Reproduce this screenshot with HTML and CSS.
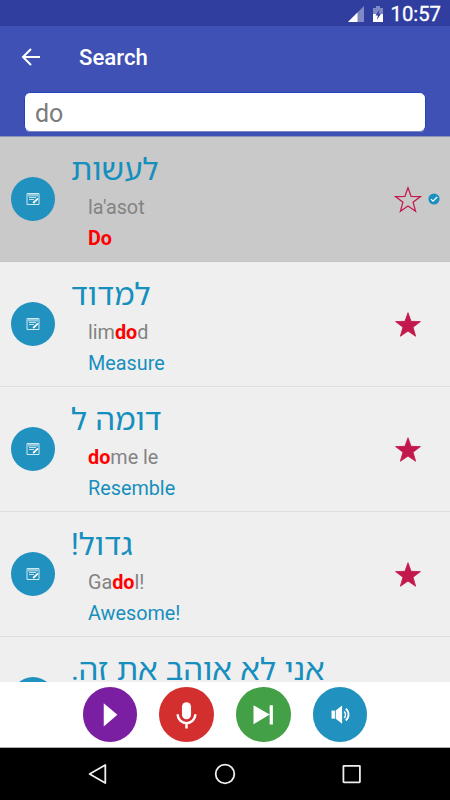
FILE: index.html
```html
<!DOCTYPE html>
<html lang="en">
<head>
    <meta charset="UTF-8">
    <meta name="viewport" content="width=device-width, initial-scale=1.0">
    <title>Search</title>
    <link rel="stylesheet" href="styles.css">
</head>
<body>
    <svg class="sprite" aria-hidden="true">
        <symbol id="note" viewBox="0 0 14 14">
            <path d="M1 1.5h12v11H1z" fill="#2191bf" stroke="#cfe9f4" stroke-width="1"/>
            <path d="M2 2h10v2.5H2z" fill="#8fc9e0"/>
            <path d="M3 5.5h7M3 7.5h5" stroke="#c4e3f0" stroke-width="1"/>
            <path d="M7.2 11L12 6.4" stroke="#fff" stroke-width="1.8"/>
        </symbol>
        <symbol id="star" viewBox="0 0 28 28">
            <path d="M14 1.7l3.05 8.6 9.4.3-7.4 5.65 2.6 9.05L14 20.1l-7.65 5.2 2.6-9.05-7.4-5.65 9.4-.3z"/>
        </symbol>
    </svg>

    <div class="screen">
        <div class="status-bar">
            <svg class="signal" width="16" height="16" viewBox="0 0 16 16">
                <path d="M16 0v16H0z" fill="#8189c4"/>
                <path d="M9.5 6.5V16H0z" fill="#fff"/>
            </svg>
            <svg class="battery" width="10" height="16" viewBox="0 0 10 16">
                <path d="M3 0h4v2h3v6H0V2h3z" fill="#8189c4"/>
                <path d="M0 8h10v8H0z" fill="#fff"/>
                <path d="M6.5 3.5L2.5 9.5H5L3.8 14 8 7.8H5.5z" fill="#303f9f"/>
            </svg>
            <span class="clock">10:57</span>
        </div>

        <header class="header">
            <div class="toolbar">
                <svg class="back" width="20" height="18" viewBox="0 0 20 18">
                    <path d="M19 9H2M10 1L2 9l8 8" fill="none" stroke="#fff" stroke-width="2"/>
                </svg>
                <h1 class="title">Search</h1>
            </div>
            <input class="search-input" type="text" value="do" aria-label="Search">
        </header>

        <main class="word-list">
            <div class="word selected">
                <div class="note-btn"><svg><use href="#note"/></svg></div>
                <div class="word-text">
                    <div class="hebrew" dir="rtl" lang="he">לעשות</div>
                    <div class="translit">la'asot</div>
                    <div class="meaning"><b>Do</b></div>
                </div>
                <svg class="star star-empty"><use href="#star"/></svg>
                <svg class="check" viewBox="0 0 12 12">
                    <circle cx="6" cy="6" r="5.6" fill="#1b90c0"/>
                    <path d="M3 6.2l2 2 4.2-4.2" fill="none" stroke="#fff" stroke-width="1.2"/>
                </svg>
            </div>
            <div class="word">
                <div class="note-btn"><svg><use href="#note"/></svg></div>
                <div class="word-text">
                    <div class="hebrew" dir="rtl" lang="he">למדוד</div>
                    <div class="translit">lim<b>do</b>d</div>
                    <div class="meaning">Measure</div>
                </div>
                <svg class="star"><use href="#star"/></svg>
            </div>
            <div class="word">
                <div class="note-btn"><svg><use href="#note"/></svg></div>
                <div class="word-text">
                    <div class="hebrew" dir="rtl" lang="he">דומה ל</div>
                    <div class="translit"><b>do</b>me le</div>
                    <div class="meaning">Resemble</div>
                </div>
                <svg class="star"><use href="#star"/></svg>
            </div>
            <div class="word">
                <div class="note-btn"><svg><use href="#note"/></svg></div>
                <div class="word-text">
                    <div class="hebrew" dir="rtl" lang="he">גדול!</div>
                    <div class="translit">Ga<b>do</b>l!</div>
                    <div class="meaning">Awesome!</div>
                </div>
                <svg class="star"><use href="#star"/></svg>
            </div>
            <div class="word">
                <div class="note-btn"></div>
                <div class="word-text">
                    <div class="hebrew" dir="rtl" lang="he">אני לא אוהב את זה.</div>
                </div>
            </div>
        </main>

        <div class="controls">
            <button class="control play" aria-label="Play">
                <svg viewBox="0 0 54 54"><path d="M20.5 16v23L34 27.5z" fill="#fff"/></svg>
            </button>
            <button class="control record" aria-label="Record">
                <svg viewBox="0 0 54 54">
                    <rect x="22.7" y="15" width="9" height="17" rx="4.5" fill="#fff"/>
                    <path d="M18.5 27v.5a8.7 8.2 0 0 0 17.4 0V27M27.2 35.5V41" fill="none" stroke="#fff" stroke-width="2.4"/>
                </svg>
            </button>
            <button class="control next" aria-label="Next">
                <svg viewBox="0 0 54 54">
                    <path d="M17.3 18l16 9.3-16 9.5zM33.3 18h3.2v19h-3.2z" fill="#fff"/>
                </svg>
            </button>
            <button class="control sound" aria-label="Sound">
                <svg viewBox="0 0 54 54">
                    <path d="M18.3 23.3h3.4v8h-3.4z" fill="#fff"/>
                    <path d="M22.5 23.3l6.3-5v18l-6.3-5z" fill="#fff"/>
                    <path d="M30.8 24.2a4.5 4.5 0 0 1 0 6.4" fill="none" stroke="#fff" stroke-width="1.4"/>
                    <path d="M32.4 21.5a7.5 7.5 0 0 1 0 11.6" fill="none" stroke="#fff" stroke-width="1.8"/>
                </svg>
            </button>
        </div>

        <nav class="nav-bar">
            <svg viewBox="0 0 24 24"><path d="M19.3 3v18L3.6 12z"/></svg>
            <svg viewBox="0 0 24 24"><circle cx="12" cy="12" r="9.3"/></svg>
            <svg viewBox="0 0 24 24"><rect x="3.4" y="3.8" width="16.5" height="16.5" rx=".5"/></svg>
        </nav>
    </div>
</body>
</html>
```
FILE: styles.css
```css
:root {
    --primary: #3f51b5;
    --primary-dark: #303f9f;
    --blue: #168fbe;
    --star: #c2184b;
}

* {
    margin: 0;
    padding: 0;
    box-sizing: border-box;
}

body {
    font-family: Roboto, sans-serif;
    background: #efefef;
}

.sprite {
    display: none;
}

svg {
    display: block;
    flex-shrink: 0;
}

.screen {
    width: 450px;
    height: 800px;
    display: flex;
    flex-direction: column;
    overflow: hidden;
}

/* Top */
.status-bar {
    height: 26px;
    flex-shrink: 0;
    display: flex;
    align-items: center;
    justify-content: flex-end;
    padding: 2px 9px 0 0;
    background: var(--primary-dark);
    color: #fff;
}

.signal {
    margin-right: 9px;
}

.battery {
    margin-right: 7px;
}

.clock {
    font-size: 20.3px;
    line-height: 24px;
    font-weight: 400;
    -webkit-text-stroke: 0.3px #fff;
}

.header {
    height: 111px;
    flex-shrink: 0;
    padding: 0 24px;
    background: var(--primary);
    border-bottom: 1px solid #8c93bd;
}

.toolbar {
    height: 66px;
    display: flex;
    align-items: center;
    padding-bottom: 4px;
}

.back {
    margin-left: -3px;
}

.title {
    margin-left: 38px;
    color: #fff;
    font-size: 22.2px;
    font-weight: 500;
}

.search-input {
    display: block;
    width: 402px;
    height: 40px;
    padding: 2px 10px 0;
    border: 1px solid #2443bb;
    border-bottom-color: #7c87c4;
    border-radius: 6px;
    background: #fff;
    color: #7b7b7b;
    font-family: inherit;
    font-size: 25px;
}

/* Words */
.word-list {
    height: 545px;
    overflow: hidden;
    background: #efefef;
}

.word {
    height: 125px;
    display: flex;
    align-items: center;
    padding: 0 11px;
    border-bottom: 1px solid #dedede;
}

.word.selected {
    background: #c9c9c9;
    border-bottom-color: #c4c4c4;
}

.note-btn {
    width: 44px;
    height: 44px;
    flex-shrink: 0;
    display: flex;
    align-items: center;
    justify-content: center;
    border-radius: 50%;
    background: #2191bf;
}

.note-btn svg {
    width: 14px;
    height: 14px;
}

.word-text {
    flex: 1;
    height: 100%;
    padding: 10px 0 0 16px;
    color: var(--blue);
    font-size: 19.8px;
    white-space: nowrap;
}

.hebrew {
    width: fit-content;
    height: 46px;
    font-family: "Noto Sans Hebrew", "Noto Sans", sans-serif;
    font-size: 31px;
    line-height: 42px;
}

.translit,
.meaning {
    height: 30px;
    padding-left: 17px;
    line-height: 30px;
}

.meaning {
    height: 31px;
    line-height: 31px;
}

.translit {
    color: #838383;
}

.word-text b {
    color: #f00;
}

.star {
    width: 28px;
    height: 28px;
    margin: 1px 17px 0 0;
    fill: var(--star);
    stroke: var(--star);
    stroke-width: 0.8;
}

.star-empty {
    margin-right: 6px;
    fill: none;
    stroke-width: 1.2;
}

.check {
    width: 12px;
    height: 12px;
    margin-right: -1px;
}

/* Bottom */
.controls {
    height: 66px;
    flex-shrink: 0;
    display: flex;
    justify-content: center;
    align-items: center;
    gap: 22px;
    background: #fff;
    border-bottom: 1px solid #b0b0b0;
}

.control {
    width: 54.6px;
    height: 54.6px;
    border: none;
    border-radius: 50%;
}

.play {
    background: #7b1fa2;
}

.record {
    background: #d32f2f;
}

.next {
    background: #43a047;
}

.sound {
    background: #2191bf;
}

.nav-bar {
    flex: 1;
    display: flex;
    justify-content: center;
    align-items: center;
    gap: 103px;
    background: #000;
}

.nav-bar svg {
    width: 24px;
    height: 24px;
    fill: none;
    stroke: #eee;
    stroke-width: 1.8;
    stroke-linejoin: round;
}
```
